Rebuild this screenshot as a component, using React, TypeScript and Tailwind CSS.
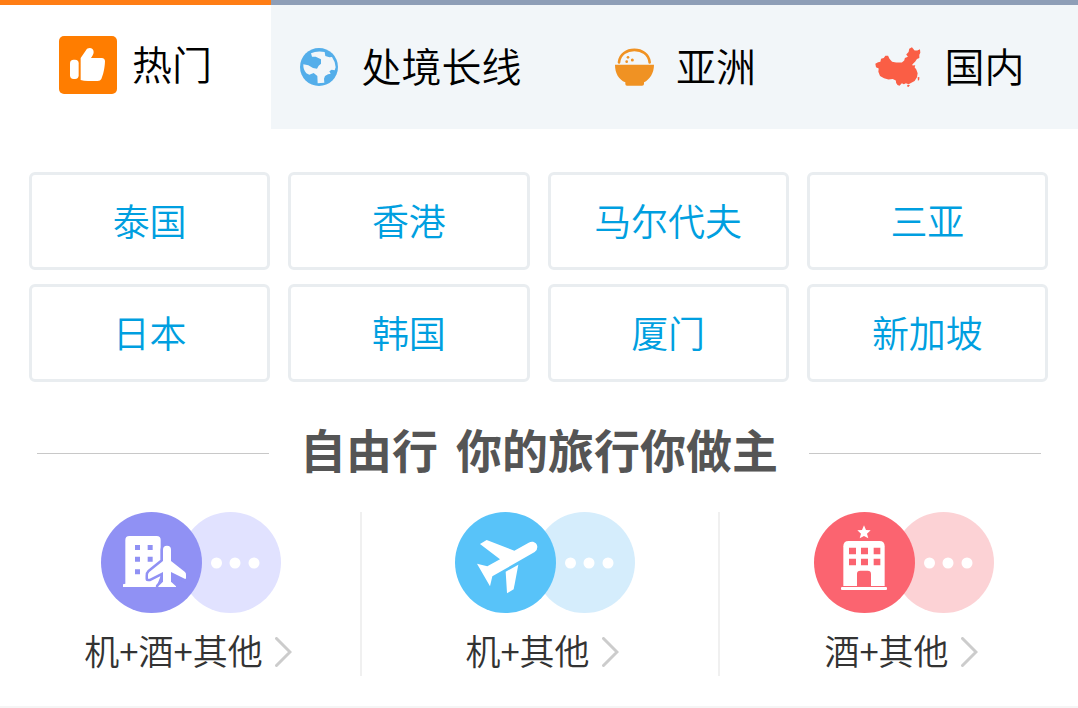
import React from "react";

function ThumbIcon() {
  return (
    <svg viewBox="177 105 174 174" className="size-[58px] shrink-0" aria-hidden="true">
      <rect x="177" y="105" width="174" height="174" rx="15" fill="#ff7d00" />
      <rect x="210" y="176" width="26" height="58" rx="11" fill="#fff" />
      <path
        d="M242 171L258 148C262 138 281 138 281 153C281 161 276 166 273 171L305 171Q315 172 315 181C314 205 309 222 304 234Q301 240 293 240L264 240Q251 240 242 237Z"
        fill="#fff"
      />
    </svg>
  );
}

function GlobeIcon() {
  return (
    <svg viewBox="57 54 114 114" className="size-[38px] shrink-0" aria-hidden="true">
      <circle cx="114" cy="111" r="57" fill="#54aeea" />
      <path
        d="M90 70Q106 62 131 66L133 78L145 82L153 81Q163 95 164 112L161 121L152 119L145 124L149 131L141 133L132 138L129 146L130 158L110 160L109 138L98 129L85 134L76 130Q66 119 67 103L82 106L96 114L108 116L113 107L120 101L120 88L104 80L93 80Z"
        fill="#f2f6f9"
      />
    </svg>
  );
}

function BowlIcon() {
  return (
    <svg viewBox="45 49 117 114" className="h-[38px] w-[39px] shrink-0" aria-hidden="true">
      <path d="M57 92C61 42 145 42 149 92" fill="none" stroke="#f09223" strokeWidth="8" strokeLinecap="round" />
      <path d="M45 99H162C162 125 149 143 132 152V157Q132 162 126 162H81Q76 162 76 157V152C56 143 45 125 45 99Z" fill="#f09223" />
      <g fill="#f09223">
        <circle cx="84" cy="77" r="4" />
        <circle cx="97" cy="85" r="4.500" />
        <circle cx="80" cy="90" r="4" />
      </g>
    </svg>
  );
}

function ChinaIcon() {
  return (
    <svg viewBox="48 47 137 119" className="h-[40px] w-[46px] shrink-0" aria-hidden="true">
      <path
        d="M49 97L57 92L64 91L66 82L74 80L79 73L87 73L91 82L99 91L111 93L128 93L135 87L137 80L146 76L141 69L148 62L150 52L158 48L166 57L174 57L182 54L183 64L180 70L180 80L173 83L168 90L162 96L159 99L160 102L168 101L166 107L171 114L175 125L173 137L166 148L155 154L148 158L140 155L134 158L128 155L121 162L115 160L111 154L110 147L101 142L88 144L75 140L63 133L58 121L59 111L51 107Z"
        fill="#fa5e45"
      />
      <path d="M175 137L180 136L180 144L176 148ZM145 159L152 160L148 166L143 164Z" fill="#fa5e45" />
    </svg>
  );
}

const tabs = [
  { label: "热门", icon: <ThumbIcon />, look: "gap-[15px] border-[#ff7d14] bg-white pb-1" },
  { label: "处境长线", icon: <GlobeIcon />, look: "gap-6 border-[#8e9eb7] bg-[#f2f6f9]" },
  { label: "亚洲", icon: <BowlIcon />, look: "gap-[22px] border-[#8e9eb7] bg-[#f2f6f9]" },
  { label: "国内", icon: <ChinaIcon />, look: "gap-6 border-[#8e9eb7] bg-[#f2f6f9]" },
];

const places = ["泰国", "香港", "马尔代夫", "三亚", "日本", "韩国", "厦门", "新加坡"];

function Badge({ main, soft, children }: { main: string; soft: string; children: React.ReactNode }) {
  return (
    <svg viewBox="0 0 180 101" className="ml-1.5 h-[101px] w-[180px]" aria-hidden="true">
      <circle cx="129.500" cy="50.500" r="50.500" fill={soft} />
      <circle cx="50.500" cy="50.500" r="50.500" fill={main} />
      <g fill="#fff">
        <circle cx="115.500" cy="51" r="5.500" />
        <circle cx="134" cy="51" r="5.500" />
        <circle cx="153" cy="51" r="5.500" />
      </g>
      {children}
    </svg>
  );
}

const hotelPlane =
  "M249 183V149A12 12 0 0 1 273 149V183L315 216Q319 220 318 226V236L314 236L273 216V245L288 259V261H235V259L249 245V216L209 236H204V226Q203 221 208 216Z";

function HotelFlightBadge() {
  return (
    <Badge main="#9091f4" soft="#e1e2ff">
      <g transform="translate(-21 -12) scale(.33333)">
        <path d="M136 251V120Q136 108 148 108H230Q242 108 242 120V228L229 261H129V253Z" fill="#fff" />
        <path
          d="M165 135h15v15h-15zM203 135h15v15h-15zM165 170h15v15h-15zM203 170h15v15h-15zM165 208h15v15h-15z"
          fill="#9091f4"
        />
        <path d={hotelPlane} fill="#9091f4" stroke="#9091f4" strokeWidth="15" strokeLinejoin="round" />
        <path d={hotelPlane} fill="#fff" />
      </g>
    </Badge>
  );
}

function FlightBadge() {
  return (
    <Badge main="#58c3f9" soft="#d5edfc">
      <g transform="translate(-14 -12) scale(.33333)" fill="#fff">
        <path d="M220 152L263 128C276 120 289 129 289 141Q289 151 281 156L154 229L147 259L108 191L139 199L177 178L117 132L137 120Z" />
        <path d="M232 194L194 215L198 280L218 268Z" />
      </g>
    </Badge>
  );
}

function HotelBadge() {
  return (
    <Badge main="#fb6470" soft="#fcd2d5">
      <g transform="translate(-14 -12) scale(.33333)">
        <path
          d="M192 76L198 90L212 91L201 101L205 115L192 108L179 115L183 101L172 91L186 90Z"
          fill="#fff"
        />
        <path d="M130 258V139Q130 123 146 123H238Q254 123 254 139V258Z" fill="#fff" />
        <rect x="123" y="261" width="138" height="9" rx="3" fill="#fff" />
        <path
          d="M147 143h21v20h-21zM183 143h21v20h-21zM221 143h20v20h-20zM147 176h21v20h-21zM183 176h21v20h-21zM221 176h20v20h-20zM171 258V222Q171 212 181 212H203Q213 212 213 222V258Z"
          fill="#fb6470"
        />
      </g>
    </Badge>
  );
}

const trips = [
  { label: "机+酒+其他", badge: <HotelFlightBadge />, pad: "pl-4" },
  { label: "机+其他", badge: <FlightBadge />, pad: "pl-1" },
  { label: "酒+其他", badge: <HotelBadge />, pad: "pl-1" },
];

export default function App() {
  return (
    <main className="border-b-2 border-[#f5f5f5] bg-white font-['Noto_Sans_CJK_SC',sans-serif] font-[350]">
      <nav className="grid grid-cols-[271fr_279fr_271fr_257fr]">
        {tabs.map((t) => (
          <button
            key={t.label}
            type="button"
            className={`flex h-[129px] items-center justify-center border-t-[5px] text-[40px] leading-none whitespace-nowrap text-black ${t.look}`}
          >
            {t.icon}
            <span className="pb-1">{t.label}</span>
          </button>
        ))}
      </nav>

      <section className="grid grid-cols-4 gap-x-[18px] gap-y-[14px] pt-[43px] pr-[30px] pl-[29px]">
        {places.map((p) => (
          <a
            key={p}
            href="#"
            className="flex h-[98px] items-center justify-center rounded-[6px] border-[3px] border-[#e9edf0] pb-0.5 text-[37px] leading-none text-[#009fe0]"
          >
            {p}
          </a>
        ))}
      </section>

      <section>
        <div className="mt-[43px] flex items-center gap-[31px] px-[37px]">
          <span className="h-px flex-1 bg-[#c8c8c8]" />
          <h2 className="flex gap-[18px] pb-2.5 text-[46px] leading-[46px] font-bold whitespace-nowrap text-[#555]">
            <span>自由行</span>
            <span>你的旅行你做主</span>
          </h2>
          <span className="h-px flex-1 bg-[#c8c8c8]" />
        </div>

        <div className="mt-[31px] grid grid-cols-[362fr_358fr_358fr] divide-x-2 divide-[#f0f0f0] pb-[30px]">
          {trips.map((t) => (
            <a key={t.label} href="#" className={`flex h-[164px] flex-col items-center ${t.pad}`}>
              {t.badge}
              <span className="mt-[18px] flex items-center gap-[12px] text-[35px] leading-[38px] whitespace-nowrap text-[#333]">
                <span className="pb-1">{t.label}</span>
                <svg viewBox="0 0 17 30" className="h-[30px] w-[17px]" fill="none" aria-hidden="true">
                  <path d="M1.500 1.500L15 15L1.500 28.500" stroke="#ccc" strokeWidth="3" strokeLinecap="round" />
                </svg>
              </span>
            </a>
          ))}
        </div>
      </section>
    </main>
  );
}
